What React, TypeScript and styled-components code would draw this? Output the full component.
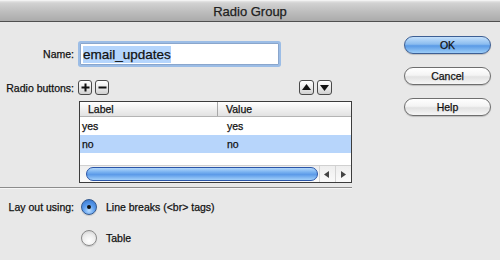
import React from 'react';
import styled, { createGlobalStyle } from 'styled-components';

const GlobalStyle = createGlobalStyle`
  html, body {
    margin: 0;
    padding: 0;
    background: #e8e8e8;
  }
  body {
    font-family: "Liberation Sans", Arial, sans-serif;
    color: #111;
    -webkit-text-stroke: 0.25px currentColor;
  }
`;

const rows = [
  { label: 'yes', value: 'yes' },
  { label: 'no', value: 'no' },
];

function PlusIcon() {
  return (
    <svg width="9" height="9" viewBox="0 0 9 9">
      <path d="M4.5 0.5v8M0.5 4.5h8" stroke="#111" strokeWidth="2" />
    </svg>
  );
}

function MinusIcon() {
  return (
    <svg width="9" height="9" viewBox="0 0 9 9">
      <path d="M0.5 4.5h8" stroke="#111" strokeWidth="2" />
    </svg>
  );
}

function Triangle({ dir }: { dir: 'up' | 'down' | 'left' | 'right' }) {
  const pts = {
    up: '0,7 4.5,1 9,7',
    down: '0,2 4.5,8 9,2',
    left: '6,1 1,4.5 6,8',
    right: '2,1 7,4.5 2,8',
  }[dir];
  return (
    <svg width="9" height="9" viewBox="0 0 9 9">
      <polygon points={pts} fill={dir === 'up' || dir === 'down' ? '#111' : '#444'} />
    </svg>
  );
}

function Radio({ checked }: { checked?: boolean }) {
  return <Styled.RadioDot checked={checked}>{checked && <Styled.RadioInner />}</Styled.RadioDot>;
}

export default function App() {
  return (
    <>
      <GlobalStyle />
      <Styled.Window>
        <Styled.TitleBar>Radio Group</Styled.TitleBar>
        <Styled.Body>
          <Styled.LeftPane>
            <Styled.NameRow>
              <Styled.Label>Name:</Styled.Label>
              <Styled.TextInput>
                <Styled.Selected>email_updates</Styled.Selected>
              </Styled.TextInput>
            </Styled.NameRow>

            <Styled.ToolRow>
              <Styled.Label>Radio buttons:</Styled.Label>
              <Styled.IconGroup>
                <Styled.SmallButton>
                  <PlusIcon />
                </Styled.SmallButton>
                <Styled.SmallButton>
                  <MinusIcon />
                </Styled.SmallButton>
              </Styled.IconGroup>
              <Styled.Spacer />
              <Styled.IconGroup>
                <Styled.SmallButton wide>
                  <Triangle dir="up" />
                </Styled.SmallButton>
                <Styled.SmallButton wide>
                  <Triangle dir="down" />
                </Styled.SmallButton>
              </Styled.IconGroup>
            </Styled.ToolRow>

            <Styled.Table>
              <Styled.HeaderRow>
                <Styled.HeaderCell first>Label</Styled.HeaderCell>
                <Styled.HeaderCell>Value</Styled.HeaderCell>
              </Styled.HeaderRow>
              {rows.map((row, index) => (
                <Styled.DataRow key={row.label} selected={index === 1}>
                  <Styled.Cell first>{row.label}</Styled.Cell>
                  <Styled.Cell>{row.value}</Styled.Cell>
                </Styled.DataRow>
              ))}
              <Styled.Spacer />
              <Styled.ScrollBar>
                <Styled.ScrollTrack>
                  <Styled.ScrollThumb />
                </Styled.ScrollTrack>
                <Styled.ScrollArrow>
                  <Triangle dir="left" />
                </Styled.ScrollArrow>
                <Styled.ScrollArrow>
                  <Triangle dir="right" />
                </Styled.ScrollArrow>
              </Styled.ScrollBar>
            </Styled.Table>

            <Styled.Separator />

            <Styled.OptionRow>
              <Styled.Label>Lay out using:</Styled.Label>
              <Radio checked />
              <Styled.OptionText>Line breaks (&lt;br&gt; tags)</Styled.OptionText>
            </Styled.OptionRow>
            <Styled.OptionRow second>
              <Styled.Label />
              <Radio />
              <Styled.OptionText>Table</Styled.OptionText>
            </Styled.OptionRow>
          </Styled.LeftPane>

          <Styled.RightPane>
            <Styled.PillButton primary>OK</Styled.PillButton>
            <Styled.PillButton>Cancel</Styled.PillButton>
            <Styled.PillButton>Help</Styled.PillButton>
          </Styled.RightPane>
        </Styled.Body>
      </Styled.Window>
    </>
  );
}

const Styled = {
  Window: styled.div`
    width: 500px;
    height: 260px;
    overflow: hidden;
    display: flex;
    flex-direction: column;
    background: #e8e8e8;
  `,
  TitleBar: styled.div`
    height: 22px;
    flex-shrink: 0;
    box-sizing: border-box;
    display: flex;
    align-items: center;
    justify-content: center;
    font-size: 13px;
    color: #202020;
    background: linear-gradient(#e6e6e6 0%, #d2d2d2 10%, #bfbfbf 50%, #ababab 100%);
    border-top: 1px solid #f2f2f2;
    border-bottom: 1px solid #505050;
  `,
  Body: styled.div`
    flex: 1;
    display: flex;
  `,
  LeftPane: styled.div`
    width: 352px;
    display: flex;
    flex-direction: column;
  `,
  RightPane: styled.div`
    display: flex;
    flex-direction: column;
    gap: 13px;
    padding: 14px 0 0 52px;
  `,
  Label: styled.div`
    width: 74px;
    flex-shrink: 0;
    text-align: right;
    font-size: 10.5px;
  `,
  NameRow: styled.div`
    display: flex;
    align-items: center;
    gap: 6px;
    margin-top: 21px;
    height: 22px;
  `,
  TextInput: styled.div`
    width: 199px;
    height: 22px;
    box-sizing: border-box;
    display: flex;
    align-items: center;
    padding-left: 2px;
    background: #fff;
    border: 1px solid #8aa6cc;
    box-shadow: 0 0 0 2px #9cbde6;
    border-radius: 1px;
    font-size: 13.5px;
  `,
  Selected: styled.span`
    background: #b5d5fc;
    padding: 1px 0;
  `,
  ToolRow: styled.div`
    display: flex;
    align-items: center;
    gap: 4px;
    margin-top: 15px;
    height: 15px;
    padding-right: 20px;
  `,
  IconGroup: styled.div`
    display: flex;
    gap: 3px;
  `,
  SmallButton: styled.div<{ wide?: boolean }>`
    width: ${({ wide }) => (wide ? 15 : 14)}px;
    height: 15px;
    box-sizing: border-box;
    display: flex;
    align-items: center;
    justify-content: center;
    border: 1px solid #4a4a4a;
    border-radius: 3px;
    background: linear-gradient(#ffffff, #e6e6e6 60%, #d0d0d0);
  `,
  Spacer: styled.div`
    flex: 1;
  `,
  Table: styled.div`
    margin: 6px 0 0 79px;
    width: 273px;
    height: 82px;
    box-sizing: border-box;
    border: 1px solid #3c3c3c;
    background: #fff;
    display: flex;
    flex-direction: column;
    font-size: 10.5px;
  `,
  HeaderRow: styled.div`
    display: grid;
    grid-template-columns: 138px 1fr;
    height: 14px;
    flex-shrink: 0;
    background: linear-gradient(#ffffff, #f0f0f0 50%, #e2e2e2);
    border-bottom: 1px solid #b4b4b4;
  `,
  HeaderCell: styled.div<{ first?: boolean }>`
    display: flex;
    align-items: center;
    padding-left: 8px;
    border-right: ${({ first }) => (first ? '1px solid #a8a8a8' : 'none')};
  `,
  DataRow: styled.div<{ selected?: boolean }>`
    display: grid;
    grid-template-columns: 138px 1fr;
    height: 18px;
    flex-shrink: 0;
    background: ${({ selected }) => (selected ? '#b7d5fb' : '#fff')};
  `,
  Cell: styled.div<{ first?: boolean }>`
    display: flex;
    align-items: center;
    padding-left: ${({ first }) => (first ? 2 : 9)}px;
  `,
  ScrollBar: styled.div`
    height: 16px;
    flex-shrink: 0;
    display: flex;
    background: linear-gradient(#eeeeee, #fafafa);
    border-top: 1px solid #d0d0d0;
  `,
  ScrollTrack: styled.div`
    flex: 1;
    display: flex;
    align-items: center;
    padding: 0 1px 0 6px;
  `,
  ScrollThumb: styled.div`
    flex: 1;
    height: 12px;
    border-radius: 7px;
    border: 1px solid #2a55a8;
    background: linear-gradient(#b4d8fb 0%, #77b0f0 35%, #5b9ae8 55%, #a2d0fa 100%);
  `,
  ScrollArrow: styled.div`
    width: 15px;
    display: flex;
    align-items: center;
    justify-content: center;
    border-left: 1px solid #d4d4d4;
  `,
  Separator: styled.div`
    margin-top: 4px;
    height: 1px;
    width: 352px;
    background: #8c8c8c;
    border-bottom: 1px solid #f6f6f6;
  `,
  OptionRow: styled.div<{ second?: boolean }>`
    display: flex;
    align-items: center;
    margin-top: ${({ second }) => (second ? 15 : 10)}px;
    height: 16px;
  `,
  RadioDot: styled.div<{ checked?: boolean }>`
    width: 16px;
    height: 16px;
    margin-left: 7px;
    box-sizing: border-box;
    border-radius: 50%;
    display: flex;
    align-items: center;
    justify-content: center;
    border: 1px solid ${({ checked }) => (checked ? '#33598f' : '#8a8a8a')};
    background: ${({ checked }) =>
      checked
        ? 'radial-gradient(circle at 50% 75%, #b8dcff 0%, #5c9ded 45%, #2f6fc9 100%)'
        : 'radial-gradient(circle at 50% 70%, #ffffff 0%, #ececec 55%, #c6c6c6 100%)'};
    box-shadow: 0 1px 1px rgba(0, 0, 0, 0.15);
  `,
  RadioInner: styled.div`
    width: 4px;
    height: 4px;
    border-radius: 50%;
    background: #111;
  `,
  OptionText: styled.div`
    margin-left: 9px;
    font-size: 10.5px;
  `,
  PillButton: styled.div<{ primary?: boolean }>`
    width: 87px;
    height: 18px;
    box-sizing: border-box;
    display: flex;
    align-items: center;
    justify-content: center;
    border-radius: 9px;
    font-size: 10.5px;
    border: 1px solid ${({ primary }) => (primary ? '#3d5f94' : '#6e6e6e')};
    background: ${({ primary }) =>
      primary
        ? 'linear-gradient(#c4e0fb 0%, #8bbcef 45%, #5a9ae6 55%, #9ccdf8 100%)'
        : 'linear-gradient(#ffffff 0%, #f4f4f4 45%, #e2e2e2 55%, #f6f6f6 100%)'};
    box-shadow: 0 1px 1px rgba(0, 0, 0, 0.18);
  `,
};
